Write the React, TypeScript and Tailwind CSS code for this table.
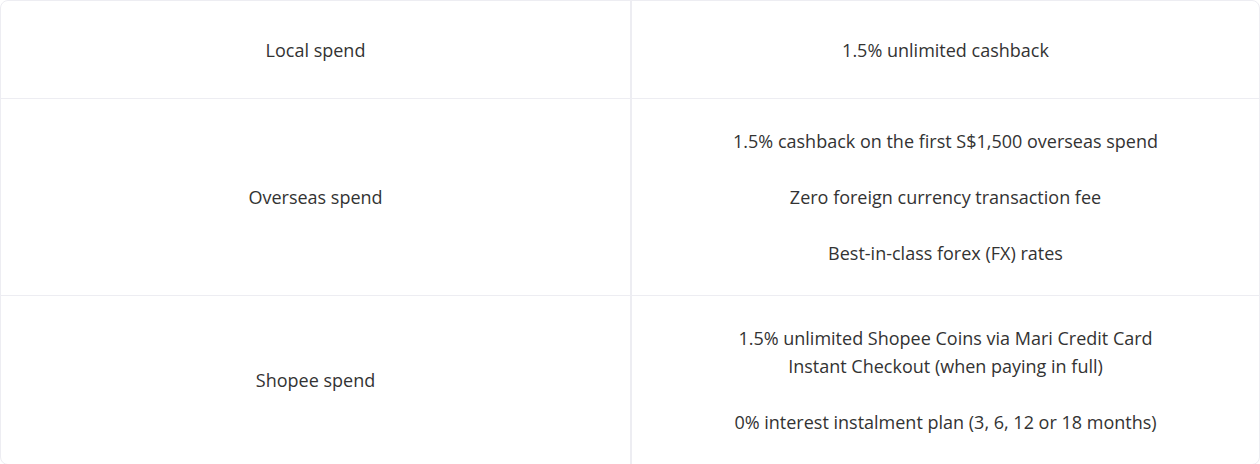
const rows: { label: string; lines: string[][] }[] = [
  { label: "Local spend", lines: [["1.5% unlimited cashback"]] },
  {
    label: "Overseas spend",
    lines: [
      ["1.5% cashback on the first S$1,500 overseas spend"],
      ["Zero foreign currency transaction fee"],
      ["Best-in-class forex (FX) rates"],
    ],
  },
  {
    label: "Shopee spend",
    lines: [
      ["1.5% unlimited Shopee Coins via Mari Credit Card", "Instant Checkout (when paying in full)"],
      ["0% interest instalment plan (3, 6, 12 or 18 months)"],
    ],
  },
];

export default function App() {
  return (
    <div className="w-[1260px] h-[464px] bg-white" style={{ fontFamily: "'Open Sans', sans-serif" }}>
      <div className="border border-[#ededf2] rounded-lg overflow-hidden text-[18px] leading-7 text-[#333333]">
        {rows.map((row, i) => (
          <div
            key={row.label}
            className={`grid grid-cols-[631px_1fr] ${i > 0 ? "border-t border-[#ededf2]" : ""}`}
          >
            <div className="flex items-center justify-center border-r-2 border-[#ededf2] text-center">
              {row.label}
            </div>
            <div
              className={`flex flex-col items-center justify-center text-center gap-7 ${
                i === 0 ? "h-[97px]" : "py-7"
              }`}
            >
              {row.lines.map((p, j) => (
                <p key={j}>
                  {p.map((l, k) => (
                    <span key={k} className="block">
                      {l}
                    </span>
                  ))}
                </p>
              ))}
            </div>
          </div>
        ))}
      </div>
    </div>
  );
}
